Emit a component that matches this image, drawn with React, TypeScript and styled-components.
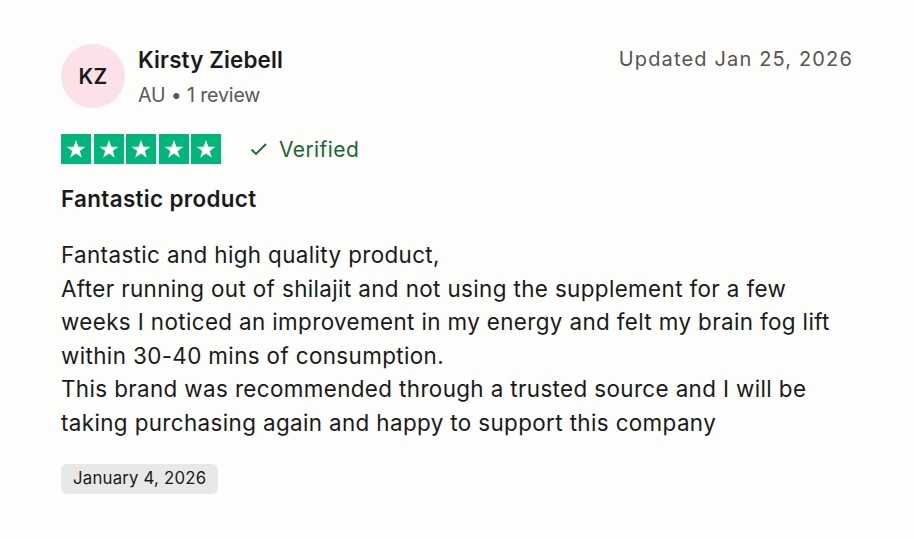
import React from "react";
import styled, { createGlobalStyle } from "styled-components";

const Global = createGlobalStyle`
  html, body { margin: 0; padding: 0; background: #fdfdfc; }
  body { font-family: Inter, "Noto Sans", sans-serif; color: #1a1a1a; }
`;

const Card = styled.article`
  box-sizing: border-box;
  width: 914px;
  height: 539px;
  padding: 44px 61px 0 61px;
  display: flex;
  flex-direction: column;
`;

const Header = styled.header`
  display: flex;
  align-items: flex-start;
  justify-content: space-between;
`;

const Consumer = styled.div`
  display: flex;
  align-items: center;
  gap: 13px;
`;

const Avatar = styled.div`
  width: 64px;
  height: 64px;
  border-radius: 50%;
  background: #fde1e9;
  display: flex;
  align-items: center;
  justify-content: center;
  font-size: 21px;
  font-weight: 600;
  color: #1a1a1a;
  letter-spacing: 0.2px;
`;

const Info = styled.div`
  display: flex;
  flex-direction: column;
  gap: 10px;
  margin-top: 0px;
`;

const Name = styled.div`
  font-size: 22.4px;
  line-height: 27px;
  font-weight: 600;
  letter-spacing: 0.15px;
  color: #1a1a1a;
`;

const Meta = styled.div`
  font-size: 19.6px;
  line-height: 24px;
  color: #595959;
  letter-spacing: -0.15px;
`;

const Updated = styled.time`
  font-size: 20px;
  color: #555555;
  margin-top: 3px;
  letter-spacing: 1.15px;
`;

const RatingRow = styled.div`
  display: flex;
  align-items: center;
  gap: 28px;
  margin-top: 26px;
`;

const Stars = styled.div`
  display: flex;
  gap: 2.5px;
`;

const StarBox = styled.div`
  width: 30px;
  height: 30px;
  background: #00b67a;
  display: flex;
  align-items: center;
  justify-content: center;
`;

const Verified = styled.div`
  display: flex;
  align-items: center;
  gap: 10px;
  color: #17692b;
  font-size: 21px;
  letter-spacing: 0.4px;
`;

const Title = styled.h2`
  margin: 21px 0 0 0;
  font-size: 22.4px;
  line-height: 28px;
  font-weight: 600;
  letter-spacing: 0.35px;
  color: #1a1a1a;
`;

const Body = styled.p`
  margin: 25px 0 0 0;
  width: 795px;
  font-size: 22.4px;
  line-height: 33.6px;
  letter-spacing: 0.38px;
  color: #1a1a1a;
  white-space: pre-line;
`;

const DateChip = styled.div`
  align-self: flex-start;
  margin-top: 24px;
  background: #e8e8e7;
  border-radius: 6px;
  padding: 4px 12px 5px;
  font-size: 16.8px;
  line-height: 21px;
  color: #1a1a1a;
  letter-spacing: 0.2px;
`;

const Star = () => (
  <svg width="22" height="22" viewBox="0 0 24 24">
    <path
      d="M12 2.2l2.6 7.3h7.7l-6.2 4.6 2.3 7.5L12 17l-6.4 4.6 2.3-7.5L1.7 9.5h7.7z"
      fill="#ffffff"
    />
  </svg>
);

const Check = () => (
  <svg width="20" height="20" viewBox="0 0 20 20">
    <path d="M2.5 10.5l4.5 4.5 10-10" fill="none" stroke="#17692b" strokeWidth="1.8" />
  </svg>
);

const text = `Fantastic and high quality product,
After running out of shilajit and not using the supplement for a few weeks I noticed an improvement in my energy and felt my brain fog lift within 30-40 mins of consumption.
This brand was recommended through a trusted source and I will be taking purchasing again and happy to support this company`;

export default function App() {
  return (
    <>
      <Global />
      <Card>
        <Header>
          <Consumer>
            <Avatar>KZ</Avatar>
            <Info>
              <Name>Kirsty Ziebell</Name>
              <Meta>AU • 1 review</Meta>
            </Info>
          </Consumer>
          <Updated>Updated Jan 25, 2026</Updated>
        </Header>
        <RatingRow>
          <Stars>
            {[0, 1, 2, 3, 4].map((i) => (
              <StarBox key={i}>
                <Star />
              </StarBox>
            ))}
          </Stars>
          <Verified>
            <Check />
            Verified
          </Verified>
        </RatingRow>
        <Title>Fantastic product</Title>
        <Body>{text}</Body>
        <DateChip>January 4, 2026</DateChip>
      </Card>
    </>
  );
}
